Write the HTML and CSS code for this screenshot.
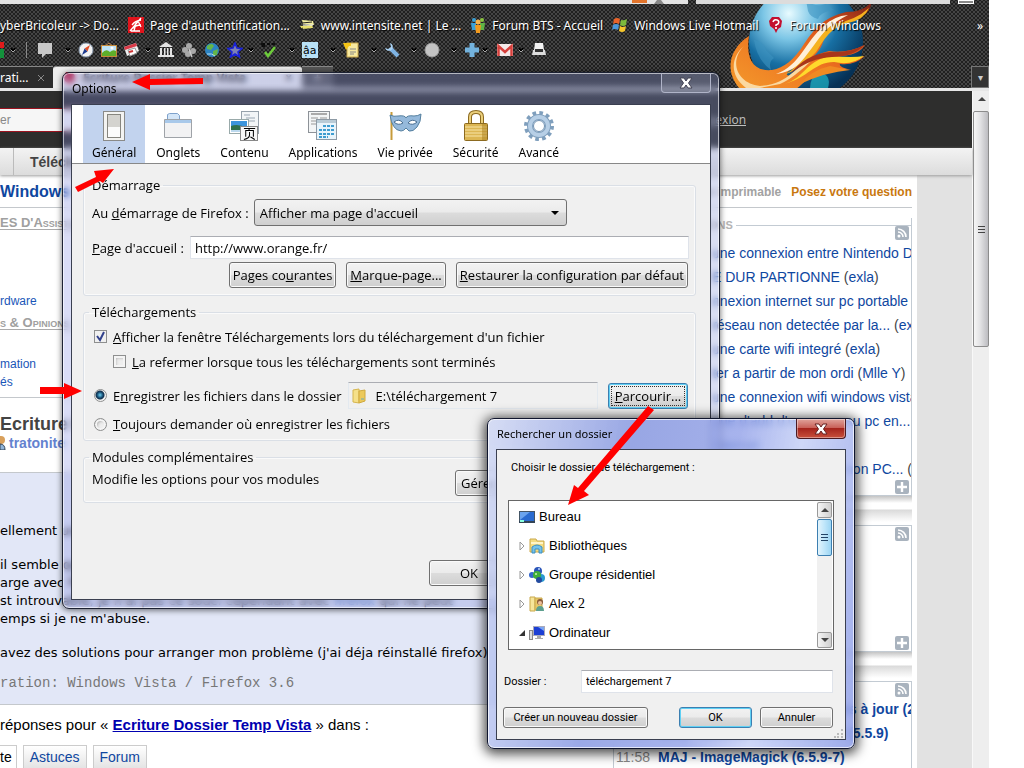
FILE: index.html
```
<!DOCTYPE html>
<html lang="fr">
<head>
    <meta charset="UTF-8">
    <meta name="viewport" content="width=device-width, initial-scale=1.0">
    <title>Options</title>
    <link rel="stylesheet" href="styles.css">
</head>
<body>
    <!-- shared symbols -->
    <svg class="defs" aria-hidden="true">
        <symbol id="rss" viewBox="0 0 14 14">
            <rect width="14" height="14" rx="2" fill="#a9b3be"/>
            <circle cx="4" cy="10" r="1.5" fill="#fff"/>
            <path d="M3 6a5 5 0 0 1 5 5M3 3a8 8 0 0 1 8 8" fill="none" stroke="#fff" stroke-width="1.6"/>
        </symbol>
        <symbol id="plus" viewBox="0 0 14 14">
            <rect width="14" height="14" rx="2" fill="#a9b3be"/>
            <path d="M7 2v10M2 7h10" stroke="#fff" stroke-width="2.4"/>
        </symbol>
        <symbol id="chev" viewBox="0 0 6 6">
            <path d="M0.500 1.500L3 4L5.500 1.500" fill="none" stroke="#000" stroke-width="2.500"/>
            <path d="M0.500 2.500L3 5L5.500 2.500" fill="none" stroke="#aaa"/>
        </symbol>
    </svg>

    <div class="browser">
        <header class="chrome">
            <svg class="planet" viewBox="0 0 144 88">
                <defs>
                    <radialGradient id="sea" cx="35%" cy="25%" r="75%">
                        <stop offset="0" stop-color="#e8fbff"/>
                        <stop offset="0.300" stop-color="#7cc6e6"/>
                        <stop offset="0.600" stop-color="#176fa3"/>
                        <stop offset="1" stop-color="#063156"/>
                    </radialGradient>
                    <linearGradient id="fire" x1="0" y1="1" x2="1" y2="0">
                        <stop offset="0" stop-color="#f39a2d"/>
                        <stop offset="0.450" stop-color="#ee7420"/>
                        <stop offset="0.700" stop-color="#d9531c"/>
                        <stop offset="1" stop-color="#7c2317"/>
                    </linearGradient>
                </defs>
                <circle cx="76" cy="42" r="57" fill="url(#sea)"/>
                <path d="M76 0q10 8 20 4l8 6q-14 2-16 9q-8-2-10-8zM24 40q10 2 12 10l8 8q-6 4-3 12q-14-10-17-30z" fill="#3d93c0" opacity=".6"/>
                <path d="M88 72q14 2 10 16h-18q0-10 8-16z" fill="#20b3c4" opacity=".7"/>
                <path d="M19 36C-3 50-5 74 11 90H64C76 84 80 70 104 69Q116 69 122 70Q108 67 110 64Q124 66 135 56Q120 62 108 56Q128 56 135 45Q116 54 99 51Q84 54 74 66C66 78 50 78 60 70C82 62 92 50 94 38Q104 24 122 20Q142 14 141 2Q134 12 116 12C92 18 84 30 74 44C64 60 54 68 42 70C20 72 16 54 19 36Z" fill="url(#fire)"/>
                <path d="M14 46C-2 62 8 84 30 86C60 84 64 66 84 58Q64 78 50 84L30 88H16C0 76 0 58 14 46Z" fill="#fbd9a0"/>
                <path d="M46 74C70 66 76 40 94 26Q104 16 118 15Q96 26 88 42C80 58 64 72 46 74Z" fill="#fff0d8"/>
                <path d="M52 76C78 64 86 34 104 24Q126 20 139 8Q134 20 118 23C98 28 92 44 86 52Q72 68 52 76Z" fill="#f6b21f"/>
                <path d="M54 84C76 78 76 58 104 56Q122 58 134 56Q122 66 104 62C84 62 78 78 54 84Z" fill="#ffd92c"/>
                <path d="M60 74Q76 54 100 52Q120 53 134 45Q124 57 102 57Q80 58 60 74Z" fill="#a8361a"/>
                <path d="M70 84Q82 70 100 66L120 70Q96 72 70 84Z" fill="#f08a22"/>
            </svg>
            <div class="navStrip">
                <div class="navBar"><svg width="40" height="4"><rect x="0" width="15" height="3" fill="#e2742b"/><path d="M22 4l3-4h4l3 4z" fill="#888"/></svg></div>
                <div class="navSearch"></div>
                <div class="navHome"></div>
            </div>
            <nav class="bookmarks">
                <a href="#">yberBricoleur -&gt; Do...</a>
                <a href="#"><svg width="16" height="16"><rect width="16" height="16" fill="#e2141c"/><path d="M2 14L13 1M4 8q3-4 9-5M5 11q3-3 8-3M3 14h9M8 6l-2 8M10 4l3 6" stroke="#fff" stroke-width="1.300" fill="none"/></svg>Page d'authentification...</a>
                <a href="#"><svg width="16" height="16"><path d="M3 3l11 1 1 4-11-1z" fill="#f4ef9f"/><path d="M1 9l12-1 1 3-11 1z" fill="#e8e070"/><path d="M3 6l10-1M0 13l4-2" stroke="#222"/><path d="M4 8h10" stroke="#fff"/></svg>www.intensite.net | Le ...</a>
                <a href="#"><svg width="16" height="16"><circle cx="4" cy="3" r="2" fill="#3aa1d8"/><circle cx="12" cy="3" r="2" fill="#8cc63f"/><path d="M1 6h5v7H2z" fill="#3aa1d8"/><path d="M10 6h5l-1 7h-4z" fill="#5fb545"/><circle cx="8" cy="5" r="2.500" fill="#f7b24a"/><path d="M5 8h6l-1 8H6z" fill="#f39a1d"/></svg>Forum BTS - Accueil</a>
                <a href="#"><svg width="16" height="16"><path d="M2 2q3-2 6 0L7 7Q4 5 1 7z" fill="#e8632a"/><path d="M9 3q3 1 6-1l-1 6q-3 2-6 0z" fill="#7dba3c"/><path d="M1 8q3-2 6 0l-1 5q-3-2-6 0z" fill="#4a96d9"/><path d="M8 9q3 2 6 0l-1 5q-3 2-6 0z" fill="#f6c62c"/></svg>Windows Live Hotmail</a>
                <a href="#"><svg width="16" height="16"><path d="M4 0h7l3 4-1 6-3 2-2 4-2-4-4-3-1-5z" fill="#c3102f"/><path d="M5 5q1-3 4-2q3 1 1 4L8 8v1M8 10v2" stroke="#fff" stroke-width="1.600" fill="none"/></svg>Forum Windows</a>
                <span class="more">»</span>
            </nav>
            <div class="iconRow">
                <svg class="cut" width="5" height="16"><path d="M0 0h4v6H0z" fill="#e01b1b"/><path d="M0 7h4v9H0z" fill="#13913b"/></svg>
                <svg class="chev near"><use href="#chev"/></svg>
                <span class="sep"></span>
                <svg width="16" height="16"><path d="M1 1h14v11H9l-4 4v-4H1z" fill="#c9c9c9"/></svg>
                <svg class="chev far"><use href="#chev"/></svg>
                <svg width="16" height="16"><circle cx="8" cy="8" r="7" fill="#f4f4f4" stroke="#8a9bb0"/><path d="M12 3L9.500 9.500L6.500 6.500z" fill="#e0502a"/><path d="M4 13L6.500 6.500L9.500 9.500z" fill="#1d3b8f"/></svg>
                <svg width="16" height="16"><path d="M4 4l4-3 4 3" stroke="#b98550" fill="none"/><rect x="0.500" y="3.500" width="15" height="11" fill="#bfe3f5" stroke="#c58a3a"/><path d="M1 11q4-5 8-1q3-3 6-1v5H1z" fill="#5eaf2b"/><circle cx="11" cy="6" r="1.500" fill="#fff"/></svg>
                <svg width="16" height="16"><path d="M0 5l12-4 3 8-12 5z" fill="#f1f1f1"/><path d="M0 5l12-4 1 3L1 8z" fill="#d93a48"/><path d="M4 8l7-2 2 5-7 3z" fill="#fff" stroke="#999"/><path d="M5 10l4-1" stroke="#c33" stroke-width="2"/></svg>
                <svg class="chev near"><use href="#chev"/></svg>
                <svg width="16" height="16"><path d="M8 0l7 5H1zM2 6h2v7H2zM6 6h1.500v7H6zM9 6h1.500v7H9zM12 6h2v7h-2zM0 13h16v2H0z" fill="#e4e4e4"/></svg>
                <svg width="16" height="16"><g fill="#a9a9a9"><circle cx="8" cy="4" r="3"/><circle cx="4" cy="8" r="3"/><circle cx="12" cy="9" r="3"/><circle cx="7" cy="12" r="3"/></g><path d="M8 7l3 8" stroke="#ccc" stroke-width="1.500"/></svg>
                <svg width="16" height="16"><circle cx="8" cy="8" r="7" fill="#2c84c4"/><path d="M3 4q5-4 7 0l-3 4-4-1zM9 9l5-2-1 6-4 1z" fill="#64b649"/><path d="M3 12q5-1 8 2" stroke="#bde" fill="none"/></svg>
                <svg width="16" height="16"><path d="M8 1l2 5 5 .5-4 3.500 1.500 5L8 12l-4.500 3L5 10 1 6.500 6 6z" fill="#7c80b4" stroke="#1a22d8" stroke-width="1.600"/></svg>
                <svg class="chev near"><use href="#chev"/></svg>
                <svg width="16" height="16"><path d="M0 2h4M1 4h3M6 2h3M11 2h3" stroke="#000" stroke-width="1.500"/><path d="M4 10l3 4 7-9" stroke="#6dcc3a" stroke-width="2.500" fill="none"/></svg>
                <svg class="chev far"><use href="#chev"/></svg>
                <svg width="16" height="16"><rect width="16" height="16" fill="#b9e2f7"/><text x="1" y="12" class="glyph">ậa</text></svg>
                <svg class="chev far"><use href="#chev"/></svg>
                <svg width="16" height="16"><rect x="4" y="1" width="11" height="14" fill="#f7e9a0" stroke="#caa84a"/><path d="M0 1h8v3H6L3 8z" fill="#f5c518"/><path d="M7 7h6M7 10h6M7 12h4" stroke="#888"/></svg>
                <svg class="chev far"><use href="#chev"/></svg>
                <svg width="16" height="16"><path d="M7 7l7 7" stroke="#7fb4e4" stroke-width="4"/><path d="M6 1a4 4 0 1 1-5 5l3 1 3-2z" fill="#a8d0f2"/></svg>
                <svg class="chev mid"><use href="#chev"/></svg>
                <svg width="16" height="16"><circle cx="8" cy="8" r="7" fill="#c4c4c4" stroke="#9a9a9a"/></svg>
                <svg class="chev mid"><use href="#chev"/></svg>
                <svg width="16" height="16"><path d="M8 1v14M1 8h14" stroke="#73b2dd" stroke-width="5"/></svg>
                <svg class="chev tight"><use href="#chev"/></svg>
                <svg width="16" height="16"><rect y="2" width="16" height="12" fill="#f4e9e9"/><path d="M1.500 14V4L8 10l6.500-6v10" fill="none" stroke="#d6403c" stroke-width="2.500"/></svg>
                <svg class="chev near"><use href="#chev"/></svg>
                <svg width="16" height="16"><path d="M4 1h8l1 7H3z" fill="#f2f2f2"/><path d="M2 8h12l1 5H1z" fill="#ddd"/><path d="M4 7h8v3H4z" fill="#333"/></svg>
            </div>
            <div class="tabs">
                <div class="tab">rati...<svg width="8" height="8"><path d="M1 1l6 6M7 1L1 7" stroke="#8a8a8a"/></svg></div>
                <div class="tab active"><svg width="12" height="14"><path d="M3 1h6l3 4-1 5-4 3-5-3-1-5z" fill="#c3102f"/></svg>Ecriture Dossier Temp Vista<span>×</span></div>
                <div class="tab add">+</div>
                <button class="tabList" aria-label="Liste des onglets">▾</button>
            </div>
        </header>

        <div class="view">
            <div class="site">
                <div class="topBar">
                    <input class="siteSearch" type="text" value="er" aria-label="Rechercher">
                    <a class="login" href="#">Connexion</a>
                </div>
                <div class="menuBar"><span class="menuCell"></span><a href="#">Téléchargement</a></div>
                <div class="sheet">
                    <div class="titleRow">
                        <a class="section" href="#">Windows</a>
                        <div><a class="print" href="#">Version imprimable</a><a class="ask" href="#">Posez votre question</a></div>
                    </div>
                    <div class="columns">
                        <main class="thread">
                            <h3>ES D'Assistance</h3>
                            <a class="link first" href="#">rdware</a>
                            <h3 class="second">s &amp; Opinions</h3>
                            <a class="link next" href="#">mation</a>
                            <a class="link" href="#">és</a>
                            <h2>Ecriture Dossier</h2>
                            <div class="author"><svg width="6" height="14"><circle cx="1" cy="4" r="4" fill="#d9a05b"/><path d="M0 8q5 0 5 6H0z" fill="#8fb3d9" stroke="#345"/></svg><a href="#">tratonite</a></div>
                            <div class="message">
                                <p>ellement un problème avec firefox.</p>
                                <p>il semble que les dossiers temporaires ne soient plus<br>arge avec firefox un fichier et que je veux l'ouvrir<br>st introuvable, je n'ai pas ce souci cependant avec <a href="#">firefox</a> qui ne peut<br>emps si je ne m'abuse.</p>
                                <p>avez des solutions pour arranger mon problème (j'ai déja réinstallé firefox)</p>
                                <p class="config">ration: Windows Vista / Firefox 3.6</p>
                            </div>
                            <p class="answers">réponses pour « <a href="#">Ecriture Dossier Temp Vista</a> » dans :</p>
                            <div class="pills"><span class="here">te</span><a href="#">Astuces</a><a href="#">Forum</a></div>
                        </main>
                        <aside class="side">
                            <section class="box talks">
                                <h4>Discussions</h4>
                                <svg class="rss"><use href="#rss"/></svg>
                                <ul>
                                    <li><a href="#">une connexion entre Nintendo D</a></li>
                                    <li><a href="#">E DUR PARTIONNE</a> (<a href="#">exla</a>)</li>
                                    <li><a href="#">nnexion internet sur pc portable</a></li>
                                    <li><a href="#">réseau non detectée par la...</a> (<a href="#">exla</a>)</li>
                                    <li><a href="#">une carte wifi integré</a> (<a href="#">exla</a>)</li>
                                    <li><a href="#">ter a partir de mon ordi</a> (<a href="#">Mlle Y</a>)</li>
                                    <li><a href="#">une connexion wifi windows vista</a></li>
                                    <li><a href="#">une d'add d'un nouveau pc en...</a></li>
                                    <li><a href="#">Internet</a></li>
                                    <li><a href="#">des problèmes avec mon PC...</a> (<a href="#">exla</a>)</li>
                                </ul>
                                <svg class="plus"><use href="#plus"/></svg>
                            </section>
                            <div class="shade"></div>
                            <section class="box blank">
                                <svg class="rss"><use href="#rss"/></svg>
                                <svg class="plus"><use href="#plus"/></svg>
                            </section>
                            <div class="shade"></div>
                            <section class="box news">
                                <svg class="rss"><use href="#rss"/></svg>
                                <ul>
                                    <li><time>12:04</time><a href="#">Le nouveau guide Firefox mis à jour (2010)</a></li>
                                    <li><time>12:01</time><a href="#">MAJ - Mozilla Firefox 3.5 FR (5.5.9)</a></li>
                                    <li><time>11:58</time><a href="#">MAJ - ImageMagick (6.5.9-7)</a></li>
                                </ul>
                            </section>
                        </aside>
                    </div>
                </div>
            </div>
            <div class="scrollbar">
                <svg width="17" height="17"><path d="M5 10l4-4 4 4z" fill="#444"/></svg>
                <div class="thumb"><i></i><i></i><i></i></div>
            </div>
        </div>
    </div>

    <!-- Firefox options -->
    <div class="window options">
        <div class="titleBar">
            <span>Options</span>
            <button class="close" aria-label="Fermer"><svg width="14" height="12"><path d="M1 1h4l2 3 2-3h4L9.500 6l3.500 5H9L7 8l-2 3H1l3.500-5z" fill="#fff" stroke="#445"/></svg></button>
        </div>
        <div class="pane">
            <div class="panelTabs">
                <button class="panelTab selected">
                    <svg width="32" height="32"><rect x="5.500" y="1.500" width="21" height="29" fill="#f3f3f1" stroke="#8a8a88"/><rect x="9.500" y="4.500" width="13" height="23" fill="#d4d3cf" stroke="#86857f"/><path d="M10 17h12v10H10z" fill="#fbfbfb"/></svg>
                    Général
                </button>
                <button class="panelTab">
                    <svg width="32" height="32"><path d="M5.500 10V4.500l2-1h8l2 2V10" fill="#d4e6f8" stroke="#7fa2cc"/><path d="M2.500 9.500h27v18h-27z" fill="#f2f2f3" stroke="#9fa3a8"/><path d="M3 10h26v3H3z" fill="#a9c9ea"/></svg>
                    Onglets
                </button>
                <button class="panelTab">
                    <svg width="32" height="32"><rect x="13.500" y="1.500" width="17" height="22" fill="#f2f5f7" stroke="#96a1ab"/><path d="M16 5h6M18 8h9M18 11h9" stroke="#9aa7b4"/><rect x="1.500" y="9.500" width="19" height="14" fill="#fff" stroke="#9aa"/><path d="M3 11h16v6H3z" fill="#3c94dc"/><path d="M3 16q7-3 16 2v4H3z" fill="#2f6f4c"/><path d="M3 20h16v2H3z" fill="#bcd9ee"/><rect x="12.500" y="16.500" width="17" height="14" fill="#f7f7f7" stroke="#888"/><text x="15" y="28" class="cjk">页</text></svg>
                    Contenu
                </button>
                <button class="panelTab">
                    <svg width="32" height="32"><rect x="1.500" y="1.500" width="21" height="21" fill="#f3f5f6" stroke="#8d9298"/><path d="M4 4h16" stroke="#aaa" stroke-width="2"/><path d="M4 8h7M4 11h7M4 14h5M13 8h7" stroke="#999"/><rect x="9.500" y="9.500" width="20" height="20" fill="#e8f4fb" stroke="#8d9aa5"/><path d="M10 10h19v3H10z" fill="#b9cbd6"/><path d="M16 16h11M12 20h15M12 24h15M12 27h9" stroke="#3f9dd0" stroke-width="2" stroke-dasharray="3 1"/></svg>
                    Applications
                </button>
                <button class="panelTab">
                    <svg width="34" height="32"><path d="M3.500 2v28" stroke="#c69b3b" stroke-width="2"/><path d="M2 5q4 2 8 1q7-1 8 2q1-3 8-2q4 0 7-2q0 8-4 13q-4 5-8 4l-3-3q-2 3-5 3Q4 20 2 5z" fill="#95b9db" stroke="#55809f"/><path d="M6 12q5-4 9 1q-5 3-9-1zM20 13q4-5 9-1q-4 4-9 1z" fill="#fff" stroke="#4a6f92"/></svg>
                    Vie privée
                </button>
                <button class="panelTab">
                    <svg width="32" height="32"><path d="M10 15V7q0-5 6-5t6 5v8" fill="none" stroke="#8c6a20" stroke-width="4"/><path d="M10 15V7q0-5 6-5t6 5v8" fill="none" stroke="#ebd07c" stroke-width="2"/><rect x="4.500" y="13.500" width="23" height="17" rx="1" fill="#dcb653" stroke="#8c6a20"/><path d="M5 17h22M5 20h22M5 23h22M5 26h22" stroke="#f8e5a8"/><path d="M22 14h5v16h-5z" fill="#a9801f" opacity=".5"/></svg>
                    Sécurité
                </button>
                <button class="panelTab">
                    <svg width="32" height="32"><circle cx="16" cy="16" r="13" fill="none" stroke="#7f9fbd" stroke-width="4" stroke-dasharray="3.600 3.200"/><circle cx="16" cy="16" r="9" fill="none" stroke="#7f9fbd" stroke-width="6"/><circle cx="16" cy="16" r="9" fill="none" stroke="#b7cfe6" stroke-width="4"/><circle cx="16" cy="16" r="5.500" fill="#fff" stroke="#6f91b2"/></svg>
                    Avancé
                </button>
            </div>
            <form class="prefs">
                <fieldset class="startup">
                    <legend>Démarrage</legend>
                    <div class="row">
                        <label for="start">Au <u>d</u>émarrage de Firefox :</label>
                        <select id="start" class="startSelect"><option>Afficher ma page d'accueil</option></select>
                    </div>
                    <div class="row home">
                        <label for="homepage"><u>P</u>age d'accueil :</label>
                        <input id="homepage" class="textBox" type="text" value="http://www.orange.fr/">
                    </div>
                    <div class="row buttons">
                        <button type="button" class="btn">Pages co<u>u</u>rantes</button>
                        <button type="button" class="btn"><u>M</u>arque-page...</button>
                        <button type="button" class="btn"><u>R</u>estaurer la configuration par défaut</button>
                    </div>
                </fieldset>
                <fieldset class="downloads">
                    <legend>Téléchargements</legend>
                    <div class="row check">
                        <input type="checkbox" id="show" checked>
                        <label for="show"><u>A</u>fficher la fenêtre Téléchargements lors du téléchargement d'un fichier</label>
                    </div>
                    <div class="row check sub">
                        <input type="checkbox" id="shut">
                        <label for="shut"><u>L</u>a refermer lorsque tous les téléchargements sont terminés</label>
                    </div>
                    <div class="row folder">
                        <input type="radio" name="where" id="save" checked>
                        <label for="save">E<u>n</u>registrer les fichiers dans le dossier</label>
                        <div class="path"><svg width="14" height="16"><path d="M1 2l6-1v14l-6-1z" fill="#f5e08a" stroke="#d5b54e"/><path d="M7 3l6-1v11l-6 2z" fill="#ecc95a" stroke="#cfa93e"/><path d="M9 11h3" stroke="#6ab"/></svg>E:\téléchargement 7</div>
                        <button type="button" class="btn focused"><u>P</u>arcourir...</button>
                    </div>
                    <div class="row ask-row">
                        <input type="radio" name="where" id="askme">
                        <label for="askme"><u>T</u>oujours demander où enregistrer les fichiers</label>
                    </div>
                </fieldset>
                <fieldset class="addons">
                    <legend>Modules complémentaires</legend>
                    <div class="row">
                        <span>Modifie les options pour vos modules</span>
                        <button type="button" class="btn manage">Gérer les modules...</button>
                    </div>
                </fieldset>
                <div class="actions">
                    <button type="button" class="btn">OK</button>
                    <button type="button" class="btn">Annuler</button>
                    <button type="button" class="btn">Aide</button>
                </div>
            </form>
        </div>
    </div>

    <!-- folder picker -->
    <div class="window picker">
        <div class="titleBar">
            <span>Rechercher un dossier</span>
            <button class="close" aria-label="Fermer"><svg width="14" height="12"><path d="M1 1h4l2 3 2-3h4L9.500 6l3.500 5H9L7 8l-2 3H1l3.500-5z" fill="#fff" stroke="#622"/></svg></button>
        </div>
        <div class="pane">
            <p>Choisir le dossier de téléchargement :</p>
            <div class="tree">
                <ul>
                    <li class="root"><svg width="16" height="16"><rect x="0.500" y="2.500" width="15" height="11" fill="#2a6bd0" stroke="#456"/><path d="M1 3h10L1 11z" fill="#6ba4ee"/><path d="M0 12h16v2H0z" fill="#345"/><path d="M1 11h4v2H1z" fill="#8fd"/></svg>Bureau</li>
                    <li><svg class="arrow" width="6" height="10"><path d="M1 1l4 4-4 4z" fill="#fff" stroke="#999"/></svg><svg width="16" height="16"><path d="M1 1h6l1 2h7v11H1z" fill="#f3dc82" stroke="#cba94a"/><path d="M2 5h12" stroke="#fff5c8" stroke-width="2"/><path d="M3 15V9q5-4 10 0v6h-3v-4H6v4z" fill="#72c2ec" stroke="#3c8fc2"/></svg>Bibliothèques</li>
                    <li><svg class="arrow" width="6" height="10"><path d="M1 1l4 4-4 4z" fill="#fff" stroke="#999"/></svg><svg width="16" height="16"><circle cx="9" cy="4" r="4" fill="#2a55b8"/><circle cx="3" cy="8" r="3" fill="#3366cc"/><circle cx="12" cy="11" r="4" fill="#2b9ad0"/><circle cx="8" cy="8" r="4" fill="#3fae3a"/><circle cx="7" cy="7" r="1" fill="#c8f5b0"/><circle cx="10" cy="13" r="3" fill="#234a9f"/><circle cx="10" cy="2" r="1" fill="#bcd6ff"/></svg>Groupe résidentiel</li>
                    <li><svg class="arrow" width="6" height="10"><path d="M1 1l4 4-4 4z" fill="#fff" stroke="#999"/></svg><svg width="16" height="16"><path d="M1 1h5v14H1z" fill="#f6e59a" stroke="#c9a94c"/><path d="M6 2h7v12H6z" fill="#e7c766" stroke="#c9a94c"/><circle cx="11" cy="6" r="3" fill="#8a5a3a"/><circle cx="11" cy="7" r="2" fill="#edc09a"/><path d="M7 15q0-5 4-5t4 5z" fill="#5d9f8e"/></svg><span>Alex <span class="serif">2</span></span></li>
                    <li><svg class="arrow" width="6" height="10"><path d="M6 2v6H0z" fill="#333"/></svg><svg width="16" height="16"><rect x="0.500" y="5.500" width="3" height="9" fill="#ddd" stroke="#888"/><rect x="4.500" y="1.500" width="11" height="9" fill="#1c3fd4" stroke="#aab"/><path d="M9 2h6v4z" fill="#7aa6f5"/><path d="M8 11h4v2h2v1H6v-1h2z" fill="#aaa"/></svg>Ordinateur</li>
                </ul>
                <div class="treeBar">
                    <button aria-label="Haut"><svg width="8" height="5"><path d="M0 4l4-4 4 4z" fill="#444"/></svg></button>
                    <div class="treeThumb"><i></i><i></i><i></i></div>
                    <button class="down" aria-label="Bas"><svg width="8" height="5"><path d="M0 0l4 4 4-4z" fill="#444"/></svg></button>
                </div>
            </div>
            <div class="field">
                <label for="folder">Dossier :</label>
                <input id="folder" class="textBox" type="text" value="téléchargement 7">
            </div>
            <div class="pickerButtons">
                <button class="btn create">Créer un nouveau dossier</button>
                <button class="btn primary">OK</button>
                <button class="btn">Annuler</button>
            </div>
            <svg class="grip" width="10" height="10"><path d="M8 1v2M8 5v2M8 8v2M4 5v2M4 8v2M1 8v2" stroke="#bbb" stroke-width="2"/></svg>
        </div>
    </div>

    <!-- red pointers -->
    <svg class="pointers" width="1024" height="768" fill="#f00" aria-hidden="true">
        <path d="M132 82l18-8v5l53-1v6l-53 1v5z"/>
        <path d="M75 187l21-10-2-6 20-2-11 14-3-2-22 11z"/>
        <path d="M40 387h24v-4l18 8-18 8v-5H40z"/>
        <path d="M648 406l6 4-70 81 5 4-21 10 6-20 4 3z"/>
    </svg>
</body>
</html>
```
FILE: styles.css
```
* {
    box-sizing: border-box;
    margin: 0;
    padding: 0;
}
body {
    height: 100vh;
    overflow: hidden;
    background: #fff;
    font-family: 'Liberation Sans', Arial, sans-serif;
    font-size: 14px;
}
a {
    color: #0f479f;
    text-decoration: none;
}
ul {
    list-style: none;
}
svg {
    flex: none;
}
.defs {
    position: absolute;
    width: 0;
    height: 0;
}
.browser {
    display: flex;
    flex-direction: column;
    height: 100vh;
    margin-right: 35px;
    overflow: hidden;
}

/* browser toolbars */
.chrome {
    position: relative;
    background: radial-gradient(#202020 1px, transparent 1px) 0 0 / 4px 4px,
        radial-gradient(#202020 1px, transparent 1px) 2px 2px / 4px 4px, #454545;
    border-bottom: 3px solid #e6e6e6;
    font-family: 'Noto Sans', 'Open Sans', sans-serif;
    font-size: 12px;
    color: #fff;
}
.planet {
    position: absolute;
    left: 730px;
    top: 0;
    width: 144px;
    height: 88px;
}
.navStrip {
    position: relative;
    display: flex;
    gap: 8px;
    height: 4px;
}
.navBar {
    flex: 1;
    background: #e4e4e4;
    text-align: right;
    line-height: 0;
}
.navBar svg {
    margin-right: 16px;
}
.navSearch {
    width: 254px;
    background: #dcdcdc;
}
.navHome {
    width: 16px;
    margin-right: 15px;
    background: #888;
    border: 1px solid #fff;
}
.bookmarks {
    position: relative;
    display: flex;
    align-items: center;
    gap: 9px;
    height: 22px;
    margin-top: 10px;
    white-space: nowrap;
}
.bookmarks a {
    display: flex;
    align-items: center;
    gap: 6px;
    color: #fff;
    text-shadow: 1px 1px 1px #000;
}
.more {
    margin-left: auto;
    padding-right: 6px;
}
.iconRow {
    display: flex;
    align-items: center;
    gap: 7px;
    height: 28px;
}
.chev {
    width: 6px;
    height: 6px;
}
.near {
    margin-left: -2px;
}
.mid {
    margin-left: 4px;
}
.far {
    margin-left: 5px;
}
.tight {
    margin-left: -5px;
    margin-right: 2px;
}
.sep {
    width: 1px;
    height: 16px;
    margin: 0 3px;
    background: #888;
}
.glyph {
    font: 11px 'DejaVu Sans', sans-serif;
}
.tabs {
    display: flex;
    height: 22px;
    margin-top: 2px;
    line-height: 22px;
}
.tab {
    display: flex;
    align-items: center;
    gap: 8px;
    width: 53px;
    border-top: 1px solid #888;
    background: #2c2c2c;
}
.active {
    width: 249px;
    padding: 0 10px;
    background: #ededed;
    color: #111;
    font-weight: bold;
    border-radius: 3px 3px 0 0;
}
.active span {
    margin-left: auto;
}
.add {
    justify-content: center;
    width: 31px;
    background: #555;
}
.tabList {
    width: 18px;
    margin-left: auto;
    border: 1px solid #777;
    background: #333;
    color: #ccc;
    font-size: 10px;
}

/* web page */
.view {
    display: flex;
    flex: 1;
    min-height: 0;
}
.site {
    flex: 1;
    min-width: 0;
    background: #e2e2e2;
}
.topBar {
    display: flex;
    justify-content: space-between;
    align-items: center;
    height: 57px;
    padding-right: 226px;
    background: #2e2e2d;
}
.siteSearch {
    width: 200px;
    height: 24px;
    border: solid #9c1420;
    border-width: 1px 0;
    background: #f6f6f6;
    color: #888;
    font-size: 12px;
}
.login {
    color: #c0c0c0;
    font-family: 'Open Sans', sans-serif;
    font-size: 12px;
    text-decoration: underline;
}
.menuBar {
    display: flex;
    align-items: center;
    height: 27px;
    background: linear-gradient(#f3f3f3, #dcdcdc);
    box-shadow: 0 1px 3px #999;
    position: relative;
}
.menuCell {
    width: 14px;
    height: 27px;
    margin-right: 16px;
    border-right: 1px solid #bbb;
}
.menuBar a {
    color: #444;
    font-weight: bold;
}
.sheet {
    margin-right: 55px;
    padding-right: 5px;
    background: #fff;
}
.titleRow {
    display: flex;
    justify-content: space-between;
    align-items: center;
    height: 33px;
    padding-top: 2px;
    border-bottom: 1px solid #c4c8cc;
    font-weight: bold;
    font-size: 12px;
}
.section {
    font-size: 16px;
}
.print {
    margin-right: 10px;
    color: #a2a2a2;
}
.ask {
    color: #c9780f;
}
.columns {
    display: grid;
    grid-template-columns: 1fr 299px;
    gap: 12px;
}
.thread {
    min-width: 0;
    overflow: hidden;
    white-space: nowrap;
}
h3 {
    margin-top: 8px;
    border-bottom: 1px solid #aaa;
    color: #a0a0a0;
    font-size: 13px;
    line-height: 13px;
    font-variant: small-caps;
}
.second {
    margin-top: 6px;
}
.link {
    display: block;
    color: #1a56b8;
    font-size: 12px;
    line-height: 18px;
}
.first {
    margin-top: 62px;
}
.next {
    margin-top: 25px;
}
h2 {
    margin-top: 6px;
    padding-top: 15px;
    border-top: 1px solid #c4c8cc;
    color: #444;
    font-size: 18px;
    line-height: 22px;
}
.author {
    display: flex;
    align-items: center;
    gap: 3px;
    height: 16px;
}
.author a {
    color: #6482cf;
    font-weight: bold;
}
.message {
    margin-top: 21px;
    padding: 49px 0 12px;
    border: solid #c4c8cc;
    border-width: 1px 0;
    background: #e2e7f7;
    font-family: 'DejaVu Sans', Verdana, sans-serif;
    font-size: 13px;
    line-height: 18px;
}
.message p {
    margin-bottom: 16px;
}
.message .config {
    margin: -4px 0 0;
    color: #777;
    font-family: 'Liberation Mono', 'Courier New', monospace;
    font-size: 14px;
}
.answers {
    margin: 11px 0;
    font-size: 15px;
    line-height: 18px;
}
.answers a {
    color: #0000b0;
    font-weight: bold;
    text-decoration: underline;
}
.pills {
    display: flex;
    gap: 6px;
}
.pills > * {
    padding: 2px 6px;
    border: 1px solid #ccc;
    background: linear-gradient(#fff, #e4e4e4);
    line-height: 18px;
}
.pills .here {
    padding: 2px 4px 2px 0;
    border-left: none;
    background: #fff;
}
.box {
    position: relative;
    border: 1px solid #c3cbd3;
    background: #fff;
    white-space: nowrap;
}
.box ul {
    overflow: hidden;
}
.box li {
    color: #444;
    line-height: 24px;
}
.talks {
    margin-top: 10px;
    border-top: none;
}
.talks h4 {
    display: flex;
    align-items: center;
    justify-content: flex-end;
    color: #b4b4b4;
    font-size: 11px;
    line-height: 14px;
    text-transform: uppercase;
}
.talks h4::after {
    content: '';
    width: 59%;
    height: 1px;
    margin-left: 3px;
    background: #c3cbd3;
}
.talks ul {
    padding: 9px 0 14px 98px;
}
.rss,
.plus {
    position: absolute;
    right: 2px;
    width: 14px;
    height: 14px;
}
.rss {
    top: 1px;
}
.talks .rss {
    top: 8px;
}
.plus {
    bottom: 1px;
}
.shade {
    height: 29px;
    background: linear-gradient(#c4c4c4 0, #fff 7px, #fff 13px, #dadada 14px, #fff 26px);
}
.blank {
    height: 127px;
}
.news ul {
    padding: 15px 0 14px 2px;
}
.news time {
    margin-right: 8px;
    color: #888;
}
.news a {
    font-weight: bold;
}
.scrollbar {
    width: 17px;
    border-left: 1px solid #f8f8f8;
    background: #eee;
}
.thumb {
    display: flex;
    flex-direction: column;
    align-items: center;
    justify-content: center;
    gap: 2px;
    height: 236px;
    border: 1px solid #8c8c8c;
    border-radius: 2px;
    background: linear-gradient(to right, #f6f6f6, #e2e2e4 45%, #bcbcc0);
}
.thumb i,
.treeThumb i {
    width: 7px;
    height: 1px;
    background: #444;
}

/* glass windows */
.window {
    position: absolute;
    padding: 0 8px 8px;
    border: 1px solid #1d2233;
    border-radius: 7px;
    font-family: 'Noto Sans', 'Open Sans', sans-serif;
    color: #000;
}
.window button,
.window input,
.window select {
    font: inherit;
}
.options {
    left: 62px;
    top: 72px;
    width: 658px;
    background: linear-gradient(to right, rgba(130, 140, 225, 0.3), rgba(130, 145, 215, 0.3));
    box-shadow: inset 0 0 0 1px rgba(255, 255, 255, 0.6), 0 1px 6px rgba(0, 0, 0, 0.6);
    backdrop-filter: blur(3px);
    font-size: 12px;
}
.titleBar {
    display: flex;
    justify-content: space-between;
    height: 31px;
}
.titleBar span {
    padding: 7px 0 0 1px;
}
.close {
    display: flex;
    align-items: center;
    justify-content: center;
    width: 50px;
    height: 20px;
    border: 1px solid #b0b4c8;
    border-top: none;
    border-radius: 0 0 4px 4px;
    background: rgba(255, 255, 255, 0.08);
}
.pane {
    position: relative;
    border: 1px solid #3a3f50;
    background: #f0f0f0;
}
.panelTabs {
    display: flex;
    gap: 2px;
    padding-left: 11px;
    border-bottom: 1px solid #888;
    background: #fff;
}
.panelTab {
    display: flex;
    flex-direction: column;
    align-items: center;
    gap: 2px;
    height: 58px;
    padding: 5px 9px 0;
    border: none;
    background: none;
    line-height: 20px;
}
.selected {
    background: #c2d3ee;
}
.prefs {
    padding: 13px 14px 13px 11px;
    font-family: 'Open Sans', 'Noto Sans', sans-serif;
    font-size: 13px;
}
fieldset {
    min-width: 0;
    border: 1px solid #dadfe6;
    border-radius: 3px;
    box-shadow: inset 0 0 0 1px #fafafa;
}
legend {
    margin-left: 5px;
    padding: 0 3px;
    line-height: 17px;
}
.row {
    display: flex;
    align-items: center;
    padding: 0 7px 0 8px;
    white-space: nowrap;
}
.startup {
    padding: 5px 0 7px;
}
.startSelect {
    width: 313px;
    height: 27px;
    margin-left: 5px;
    padding: 0 5px;
    appearance: none;
    border: 1px solid #707070;
    border-radius: 3px;
    background: url("data:image/svg+xml,%3Csvg xmlns='http://www.w3.org/2000/svg' width='8' height='4'%3E%3Cpath d='M0 0h8L4 4z'/%3E%3C/svg%3E") no-repeat right 7px center,
        linear-gradient(#f2f2f2, #ebebeb 48%, #dcdcdc 52%, #cfcfcf);
}
.home {
    margin-top: 10px;
    padding-right: 6px;
}
.textBox {
    flex: 1;
    min-width: 0;
    height: 23px;
    padding: 0 4px;
    border: 1px solid #dfe3ea;
    border-top-color: #abadb3;
    background: #fff;
}
.home .textBox {
    margin-left: 6px;
}
.buttons {
    justify-content: flex-end;
    gap: 10px;
    margin-top: 3px;
}
.btn {
    height: 26px;
    padding: 0 3px;
    border: 1px solid #707070;
    border-radius: 3px;
    background: linear-gradient(#f2f2f2, #ebebeb 48%, #dcdcdc 52%, #cfcfcf);
    box-shadow: inset 0 0 0 1px #fafafa;
    white-space: nowrap;
}
.downloads {
    margin-top: 8px;
    padding: 3px 0 1px;
}
.downloads .row {
    gap: 6px;
    padding-left: 10px;
}
.check {
    height: 25px;
}
.downloads .sub {
    padding-left: 29px;
}
input[type="checkbox"],
input[type="radio"] {
    appearance: none;
    width: 13px;
    height: 13px;
    border: 1px solid #8e8f8f;
    background: #eee;
    box-shadow: inset 0 0 0 2px #f4f4f4, inset 2px 2px 3px #aaa;
}
input[type="checkbox"]:checked {
    background: url("data:image/svg+xml,%3Csvg xmlns='http://www.w3.org/2000/svg' width='11' height='11'%3E%3Cpath d='M2 5l3 4 4-8' fill='none' stroke='%2331418c' stroke-width='2'/%3E%3C/svg%3E");
    box-shadow: none;
}
input[type="radio"] {
    border-radius: 50%;
}
input[type="radio"]:checked {
    background: radial-gradient(circle at 5px 5px, #6cd0f2 0, #14486e 3px, #12304c 4px, #f2f2f2 5px);
    box-shadow: none;
}
.folder {
    margin-top: 8px;
}
.path {
    display: flex;
    align-items: center;
    flex: 1;
    gap: 10px;
    height: 27px;
    margin: 0 4px 0 0;
    padding-left: 3px;
    border: 1px solid #e3e9ef;
    border-top-color: #abadb3;
}
.focused {
    width: 80px;
    border-color: #3c7fb1;
    box-shadow: inset 0 0 0 1px #5fd0f4;
    outline: 1px dotted #333;
    outline-offset: -4px;
}
.ask-row {
    height: 30px;
}
.addons {
    margin-top: 8px;
    padding-bottom: 6px;
}
.addons .row {
    align-items: flex-start;
    justify-content: space-between;
    margin-top: 4px;
}
.manage {
    width: 233px;
    padding: 0 5px;
    text-align: left;
}
.actions {
    display: flex;
    justify-content: flex-end;
    gap: 10px;
    margin: 57px 7px 0 0;
}
.actions .btn {
    width: 80px;
}

/* folder picker */
.picker {
    left: 487px;
    top: 418px;
    width: 368px;
    border-color: #10162e;
    background: linear-gradient(100deg, rgba(205, 214, 245, 0.75) 0, rgba(130, 148, 225, 0.8) 35%, rgba(145, 160, 232, 0.8) 60%, rgba(190, 202, 245, 0.75) 75%, rgba(140, 156, 230, 0.85) 100%);
    box-shadow: inset 0 0 0 1px rgba(255, 255, 255, 0.7), 0 2px 12px 3px rgba(0, 0, 0, 0.7);
    backdrop-filter: blur(3px);
    font-size: 11px;
}
.picker .titleBar {
    height: 30px;
}
.picker .close {
    border-color: #4a1a22;
    background: linear-gradient(#e0a49c, #c9625a 45%, #a5241c 50%, #c8503c);
    box-shadow: inset 0 0 0 1px rgba(255, 255, 255, 0.4);
}
.picker .pane {
    padding: 10px 12px 11px 7px;
    font-family: Roboto, 'Open Sans', sans-serif;
}
.picker p {
    padding-left: 7px;
    line-height: 16px;
}
.tree {
    display: flex;
    justify-content: space-between;
    height: 150px;
    margin: 24px -1px 0 4px;
    padding: 1px;
    border: 1px solid #666;
    background: #fff;
}
.tree ul {
    padding-left: 9px;
    font-family: 'Liberation Sans', Arial, sans-serif;
    font-size: 13px;
}
.tree li {
    display: flex;
    align-items: center;
    gap: 4px;
    height: 29px;
}
.serif {
    font-family: 'Liberation Serif', serif;
    font-size: 14px;
}
.treeBar {
    display: flex;
    flex-direction: column;
    width: 15px;
    background: #f0f0f0;
}
.treeBar button {
    height: 16px;
    border: 1px solid #999;
    border-radius: 2px;
    background: linear-gradient(to right, #f4f4f4, #d0d0d0);
    line-height: 0;
}
.treeBar .down {
    margin-top: auto;
}
.treeThumb {
    display: flex;
    flex-direction: column;
    align-items: center;
    justify-content: center;
    gap: 2px;
    height: 37px;
    margin-top: 1px;
    border: 1px solid #3c7fb1;
    border-radius: 2px;
    background: linear-gradient(to right, #e3f4fc, #bfe6fa 50%, #9cd5f3);
}
.treeThumb i {
    background: #246;
}
.field {
    display: flex;
    align-items: center;
    justify-content: space-between;
    margin-top: 20px;
}
.field .textBox {
    flex: none;
    width: 252px;
}
.pickerButtons {
    display: flex;
    gap: 8px;
    margin: 14px 0 0 -1px;
}
.pickerButtons .btn {
    width: 73px;
    height: 21px;
}
.pickerButtons .create {
    width: 145px;
    margin-right: auto;
}
.pickerButtons .primary {
    border-color: #3c7fb1;
    box-shadow: inset 0 0 0 1px #5fd0f4;
}
.grip {
    position: absolute;
    right: 1px;
    bottom: 1px;
}
.cjk {
    font: 13px 'Noto Sans CJK SC', sans-serif;
}
.pointers {
    position: absolute;
    left: 0;
    top: 0;
    pointer-events: none;
}
```
